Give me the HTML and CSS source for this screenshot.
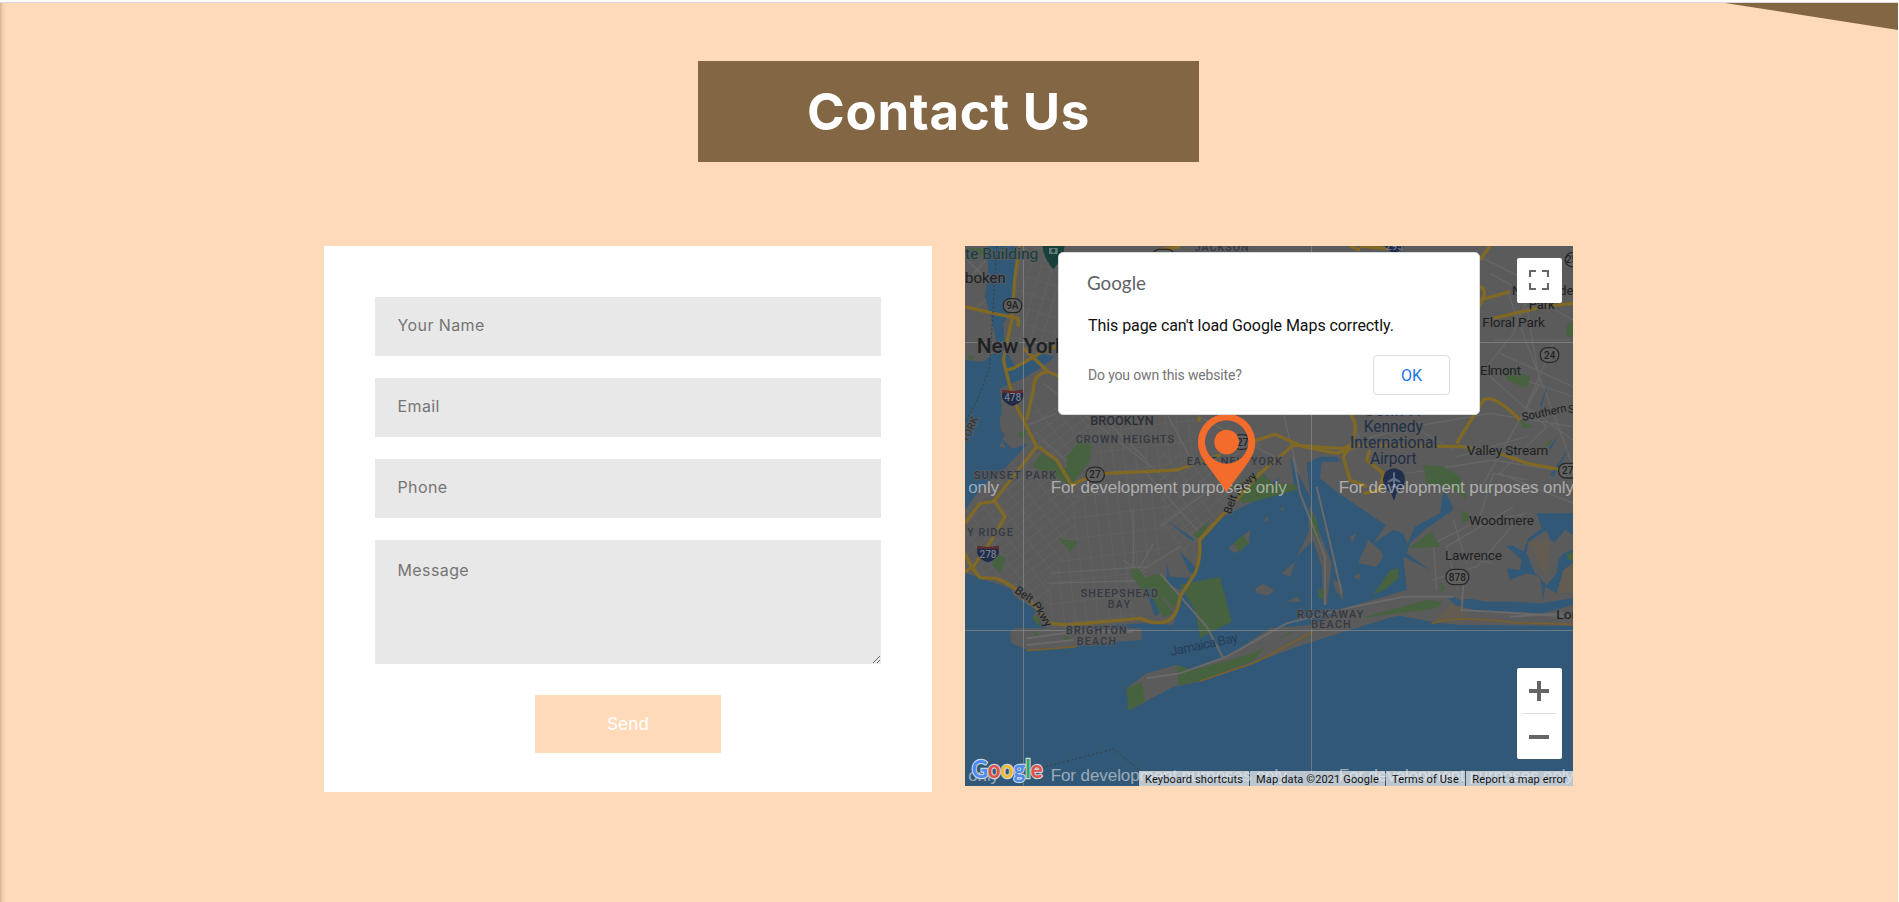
FILE: index.html
```html
<!DOCTYPE html>
<html lang="en">
<head>
<meta charset="utf-8">
<title>Contact Us</title>
<link rel="stylesheet" href="styles.css">
</head>
<body>
<main class="contact">
  <svg class="corner" viewBox="0 0 173 27"><path d="M0 0H173V27Z" fill="#836643"/></svg>
  <h1 class="title">Contact Us</h1>
  <div class="columns">
    <form class="form">
      <input class="field" type="text" placeholder="Your Name">
      <input class="field" type="text" placeholder="Email">
      <input class="field" type="text" placeholder="Phone">
      <textarea class="field message" placeholder="Message"></textarea>
      <button class="send" type="button">Send</button>
    </form>
    <section class="map">
      <svg class="canvas" viewBox="15 18 1824 1620">
        <defs>
          <pattern id="g1" width="44" height="26" patternUnits="userSpaceOnUse" patternTransform="rotate(-38)"><path d="M0 0H44M0 0V26" class="street"/></pattern>
          <pattern id="g2" width="34" height="62" patternUnits="userSpaceOnUse" patternTransform="rotate(-7)"><path d="M0 0H34M0 0V62" class="street"/></pattern>
          <pattern id="g3" width="32" height="46" patternUnits="userSpaceOnUse" patternTransform="rotate(17)"><path d="M0 0H32M0 0V46" class="street"/></pattern>
        </defs>
        <rect x="15" y="18" width="1824" height="1620" fill="#5b5b5b"/>
        <path fill="url(#g3)" d="M170 18H300V320H165Z"/>
        <path fill="url(#g1)" d="M215 500H410L350 840 250 1140 100 1010 20 1000V780L230 620Z"/>
        <path fill="url(#g2)" d="M400 520H700V640L400 780Z"/>
        <path fill="url(#g2)" d="M350 730H620V920L560 1000 530 1150H250Z"/>
        <path fill="url(#g1)" d="M600 640H880L780 820 680 940 600 860Z"/>
        <g class="local">
          <path d="M620 520 700 670 900 600M560 700 720 880M600 860 800 710M700 520 960 660M970 520 1020 720M820 520 900 620M490 960 690 1110M270 1000 560 980M260 1030 600 1020M580 910 530 1000 660 920M520 810 520 980M1170 520 1200 600 1360 560 1590 520 1839 560M1560 50 1720 130 1660 280 1580 380 1839 470M1580 400 1760 560 1620 700 1839 790M1700 200 1740 430 1650 590 1560 750M1780 310 1700 500 1839 600M1340 700 1600 660 1839 700M1590 100 1839 240M1600 300H1830M1620 340 1839 440M1640 150 1780 520 1839 680M1430 1050 1420 910 1540 850 1700 820M1500 1070 1460 920 1660 800M1415 1020 1550 980 1690 820M1480 840 1520 970M1500 950 1600 970M1480 630 1360 560 1290 570M1490 650 1700 590M1560 830 1600 700 1700 720M20 60 120 150M40 210 90 170M20 120 80 60M250 430 600 700M320 430 560 660M190 560 290 520M250 600 360 700"/>
        </g>
        <g fill="#47623f">
          <path d="M120 460 105 500 82 498Z"/><path d="M320 650 370 590 395 610 390 660 340 730 320 690Z"/><path d="M215 680 245 640 340 700 340 745 290 710Z"/><path d="M165 575 200 570 190 600Z"/>
          <path d="M95 975 110 940 138 955 120 1000Z"/><path d="M295 895 355 905 330 935Z"/><path d="M510 990 535 985 640 1120 610 1130 520 1015Z"/><path d="M1630 380 1710 410 1700 445 1640 420Z"/><path d="M1390 675 1450 680 1500 710 1520 780 1470 740 1400 730Z"/><path d="M1820 250H1839V290H1820Z"/><path d="M20 345 45 350 30 362Z"/>
          <path d="M1500 810 1540 830 1510 850ZM1740 820 1770 850 1815 820 1800 850 1760 875ZM1680 540 1720 560 1690 565ZM1750 620 1780 590 1770 615ZM20 25H95L60 45Z"/>
        </g>
        <g fill="#325877">
          <path d="M80 18H178L165 110 160 200 130 250 135 330 170 385 240 340 285 350 240 385 190 415 120 445 125 520 118 555 135 580 118 620 155 628 205 610 130 690 65 740 15 810V360L70 365 115 330 95 240 75 170 85 100Z"/>
          <path d="M15 1000 60 1015 150 1045 165 1070 230 1110 220 1130 260 1165 330 1165 550 1150 640 1155 660 1060 710 990 720 910 790 830 900 775 1005 750 990 650 1050 770 1040 670 1080 650 1130 650 1140 665 1085 665 1080 715 1130 755 1210 810 1278 855 1240 910 1300 870 1330 880 1342 912 1365 860 1440 820 1450 750 1395 680 1470 780 1480 810 1400 865 1350 910 1340 940 1410 990 1330 950 1340 1050 1270 1070 1170 1100 1415 1145 1500 1155 1839 1158V1638H15Z"/>
          <path d="M1450 1070 1500 1070 1580 1085 1660 1085 1740 1090 1839 1075V1095L1750 1120 1510 1110Z"/>
          <path d="M1730 820H1839V885L1815 870 1785 905 1770 900 1760 870 1705 905 1700 940 1725 1000 1760 1035 1790 1000 1795 960 1810 940 1839 930V1060L1790 1060 1755 1040 1750 1080 1740 1010 1700 1000 1650 1020 1640 985 1680 990 1685 960 1640 920 1655 915 1690 935 1705 895 1745 865Z"/>
          <path d="M618 840 700 895 705 905 685 895Z"/><path d="M660 935 705 980 710 1005 690 1000Z"/><path d="M620 970 630 1010 710 1015 660 1050 620 1030Z"/>
          <path d="M590 1040Q630 1040 645 1100L620 1070ZM555 1040 580 1045 610 1110 585 1130ZM910 700 935 730 960 710 930 760ZM120 590 160 630 140 630ZM1765 425 1745 500 1740 495ZM1800 580 1770 630 1765 625ZM1830 620 1780 710 1770 705Z"/>
        </g>
        <g fill="#5b5b5b">
          <path d="M120 530 160 505 200 530 190 570 150 600 122 570Z"/>
          <path d="M150 1180Q155 1160 190 1165H545V1200L470 1205 330 1220 200 1230 155 1210Z"/>
          <path d="M500 1345 560 1300 650 1275 700 1290 800 1250 930 1165 1060 1155 1160 1105 1260 1080 1440 1050 1480 1090 1300 1130 1150 1175 1000 1225 880 1270 720 1325 640 1340 510 1410Z"/>
          <path d="M1415 1150 1470 1090 1540 1110 1740 1120 1839 1115V1150L1680 1150Z"/>
          <path d="M805 925 870 870 868 910 825 940ZM885 1045 910 1032 943 1050 925 1068 890 1060ZM965 1000 1005 965 990 1010ZM1010 950 1035 900 1070 820 1060 900ZM980 1085 1010 1070 1025 1085ZM1195 970 1225 900 1260 930 1270 950 1250 980ZM1170 890 1190 880 1175 910ZM910 840 925 830 922 845ZM960 810 970 800 972 812ZM1120 1020 1145 1030 1150 1080 1125 1050ZM1180 1010 1200 1000 1198 1020ZM1450 1060 1500 1050 1550 1075 1500 1080Z"/>
          <path d="M1050 790 1075 870 1115 970 1100 1095 1090 1090 1085 980 1045 860Z"/>
        </g>
        <path fill="#625d50" d="M1415 1150 1470 1092 1510 1110 1510 1135ZM1705 905 1770 900 1760 1010 1730 960ZM1810 990 1839 970V1060L1790 1060Z"/>
        <g fill="#47623f">
          <path d="M660 1035 780 1010 815 1145 720 1193 705 1110Z"/><path d="M820 910 850 885 865 910 840 935Z"/><path d="M700 885 745 845 740 865 715 895Z"/><path d="M500 1345 545 1325 555 1385 505 1412ZM650 1275 700 1290 880 1240 1000 1170 930 1245 710 1325 655 1335Z"/><path d="M1050 815 1070 840 1085 930 1050 860ZM1345 925 1415 875 1440 920ZM1240 1065 1290 990 1315 985 1315 1015 1280 1045ZM1200 1135 1400 1080 1450 1085 1430 1105Z"/><path d="M550 1015 600 1000 660 1070 640 1105 600 1060 625 1115 600 1120ZM215 1130 245 1130 235 1160ZM900 700 940 730 1010 735V750L900 780 850 790 810 740ZM1440 1030 1455 1040 1445 1060ZM310 1190H325V1200H310ZM220 1175 245 1185 225 1190ZM1820 945 1839 935V960H1825ZM1075 1050 1090 1045V1075H1075Z"/>
        </g>
        <path fill="#5b5b5b" d="M880 1262 930 1205 1060 1155 1060 1180 960 1235Z"/>
        <g class="light"><path d="M200 1195 310 1180 520 1175M200 1215 340 1200M560 1315 660 1300 800 1250 980 1150 1180 1100 1330 1070 1480 1070M1510 1030 1505 1110 1839 1130M1650 1130 1839 1118M600 1000 740 1160 790 1255M1000 650 1020 760 1095 950 1095 1095M1070 740 1120 950 1145 1060"/></g>
        <g class="coast"><path d="M200 1232 350 1220M720 1323 880 1270 1060 1175M1415 1150Q1500 1125 1660 1148L1839 1153"/></g>
        <g class="road"><path d="M178 18 165 110 155 240 130 360 160 480 230 620 100 785 60 790 15 850M15 200 100 220 175 235 175 260M140 390 160 385 240 340 310 310M190 325 265 395 300 410M265 395Q220 400 220 450L200 540M235 620 290 660 335 735 390 710 440 700 650 690 780 645M105 785 135 830 95 900 40 980 15 995M15 940Q30 980 60 1013L110 1015Q180 1040 270 1150L320 1155 540 1135Q650 1180 660 1070L705 1000Q725 950 718 900L810 800 900 700 1000 615 1090 622 1150 625 1170 615 1510 620M860 610 945 583 1030 620 1130 640 1190 620M1170 520Q1210 570 1150 650L1170 720 1220 740M1230 630 1220 660 1270 700 1260 750 1210 760M1490 610 1570 480Q1600 460 1680 540M1510 620 1620 640 1700 670 1839 695M1560 180 1650 155M1550 210Q1590 150 1560 140M1600 235 1750 200 1839 190M1560 60 1590 18M1200 18 1320 30M1170 18 1200 30M720 530 715 545M600 30 660 20"/></g>
        <g class="tiles"><path d="M190.500 18V1638M1054.500 18V1638M15 307.500H1839M15 1171.500H1839"/></g>
        <path d="M220 1590 460 1527 540 1590M110 18 90 370Q60 480 15 545" fill="none" stroke="#363e45" stroke-width="3" stroke-dasharray="6 7"/>
        <g class="shield"><rect x="130" y="176" width="55" height="42" rx="20"/><rect x="378" y="682" width="55" height="44" rx="21"/><rect x="820" y="584" width="50" height="44" rx="20"/><rect x="1741" y="323" width="55" height="44" rx="20"/><rect x="1796" y="670" width="65" height="44" rx="20"/><rect x="1816" y="38" width="55" height="42" rx="20"/><rect x="1458" y="988" width="68" height="46" rx="22"/><rect x="578" y="28" width="65" height="42" rx="20"/></g>
        <g><path d="M128 449Q158 457 189 449L190 470Q184 490 158 498 130 490 126 470Z" fill="#202c4a"/><path d="M128 449Q158 457 189 449V459H128Z" fill="#652b2b"/><path d="M53 917Q84 925 115 917L117 938Q110 958 84 967 56 958 51 938Z" fill="#202c4a"/><path d="M53 917Q84 925 115 917V926H53Z" fill="#652b2b"/><path d="M1272 12H1334Q1328 34 1303 38 1280 34 1272 12Z" fill="#202c4a"/></g>
        <path d="M248 18H313Q315 45 280 88 248 50 248 18Z" fill="#17403d"/><path d="M267 24H293V42H267Z" fill="#667b78"/><circle cx="280" cy="32" r="6" fill="#17403d"/>
        <path d="M1302 685Q1335 690 1335 718 1332 748 1310 758L1302 783 1293 758Q1270 745 1269 718 1272 688 1302 685Z" fill="#202f4d"/><path d="M1299 700Q1302 692 1305 700V713L1321 723V728L1305 723V736L1310 740V744L1302 742 1294 744V740L1299 736V723L1283 728V723L1299 713Z" fill="#63708a"/>
        <g class="label">
          <text class="poi" x="15" y="57" font-size="45" textLength="220" lengthAdjust="spacingAndGlyphs">te Building</text>
          <text x="15" y="129" font-size="43" textLength="122" lengthAdjust="spacingAndGlyphs">boken</text>
          <text class="city" x="50" y="338" font-size="60" textLength="268" lengthAdjust="spacingAndGlyphs">New York</text>
          <text class="borough" x="391" y="555" font-size="36" textLength="190" lengthAdjust="spacingAndGlyphs">BROOKLYN</text>
          <text x="1567" y="260" font-size="41" textLength="188">Floral Park</text>
          <text x="1706" y="206" font-size="39" textLength="78">Park</text><text x="1656" y="164" font-size="40">N</text><text x="1797" y="164" font-size="40">de</text>
          <text x="1560" y="406" font-size="41" textLength="123">Elmont</text>
          <text x="1520" y="645" font-size="41" textLength="245">Valley Stream</text>
          <text x="1527" y="855" font-size="41" textLength="195">Woodmere</text>
          <text x="1455" y="960" font-size="41" textLength="171">Lawrence</text>
          <text x="1789" y="1136" font-size="41">Long</text>
          <text x="1688" y="543" font-size="34" transform="rotate(-12 1688 543)">Southern</text><text x="1824" y="519" font-size="34">St</text>
        </g>
        <g class="label area">
          <text x="704" y="33" textLength="162">JACKSON</text>
          <text x="347" y="608" textLength="295">CROWN HEIGHTS</text><text x="680" y="675" textLength="285">EAST NEW YORK</text><text x="42" y="716" textLength="246">SUNSET PARK</text><text x="22" y="889" textLength="136">Y RIDGE</text>
          <text x="362" y="1071" textLength="232">SHEEPSHEAD</text><text x="443" y="1104" textLength="68">BAY</text><text x="318" y="1183" textLength="182">BRIGHTON</text><text x="350" y="1215" textLength="118">BEACH</text><text x="1012" y="1133" textLength="198">ROCKAWAY</text><text x="1054" y="1165" textLength="118">BEACH</text>
          <text x="22" y="610" transform="rotate(-66 22 610)">YORK</text>
        </g>
        <g class="label airport"><text x="1300" y="528" text-anchor="middle" textLength="165">John F.</text><text x="1300" y="575" text-anchor="middle" textLength="178">Kennedy</text><text x="1301" y="623" text-anchor="middle" textLength="262">International</text><text x="1300" y="671" text-anchor="middle" textLength="140">Airport</text></g>
        <g class="bay"><text x="634" y="1248" textLength="206" transform="rotate(-12 634 1248)">Jamaica Bay</text></g>
        <g class="roadname"><text x="812" y="824" transform="rotate(-70 812 824)">Belt</text><text x="836" y="768" transform="rotate(-46 836 768)">Pkwy</text><text x="162" y="1056" transform="rotate(35 162 1056)">Belt</text><text x="216" y="1094" transform="rotate(59 216 1094)">Pkwy</text></g>
        <g class="route"><text x="157" y="208">9A</text><text x="405" y="715">27</text><text x="848" y="618">27</text><text x="1769" y="356">24</text><text x="1823" y="703">27</text><text x="1834" y="70">25</text><text x="1492" y="1022">878</text></g>
        <g class="route inter"><text x="158" y="483">478</text><text x="84" y="954">278</text><text x="1303" y="30">295</text></g>
        <g class="mark"><text x="25" y="758" textLength="92">only</text><text x="272" y="758" textLength="708">For development purposes only</text><text x="1136" y="758" textLength="706">For development purposes only</text><text x="25" y="1622" textLength="92">only</text><text x="272" y="1622" textLength="708">For development purposes only</text><text x="1136" y="1622" textLength="706">For development purposes only</text></g>
        <path fill="#f46c2b" fill-rule="evenodd" d="M800 522C752 522 714 560 714 608 714 638 732 663 746 682 768 711 786 737 800 756 814 735 838 705 854 682 870 659 886 637 886 608 886 560 848 522 800 522ZM800 541A65 65 0 0 1 800 671 65 65 0 0 1 800 541Z"/><circle cx="800" cy="606" r="37" fill="#f46c2b"/>
        <text class="brand" x="35" y="1615" textLength="213" lengthAdjust="spacingAndGlyphs"><tspan fill="#4d8bf0">G</tspan><tspan fill="#e45045">o</tspan><tspan fill="#f2bb23">o</tspan><tspan fill="#4d8bf0">g</tspan><tspan fill="#3ba45b">l</tspan><tspan fill="#e45045">e</tspan></text>
      </svg>
      <div class="dialog">
        <svg class="wordmark" viewBox="0 0 62 26"><text x="0" y="15" textLength="59" lengthAdjust="spacingAndGlyphs">Google</text></svg>
        <p class="error">This page can't load Google Maps correctly.</p>
        <div class="dialog-row"><span class="owner">Do you own this website?</span><button class="ok" type="button">OK</button></div>
      </div>
      <button class="full" type="button" aria-label="Fullscreen"><svg width="20" height="20" viewBox="0 0 20 20"><path d="M1 7V1H7M13 1H19V7M19 13V19H13M7 19H1V13" fill="none" stroke="#666" stroke-width="2.200"/></svg></button>
      <div class="zoom"><svg width="20" height="20"><path d="M0 10H20M10 0V20" stroke="#666" stroke-width="4"/></svg><i class="rule"></i><svg width="20" height="20"><path d="M0 10H20" stroke="#666" stroke-width="4"/></svg></div>
      <footer class="credits"><span class="credit c1">Keyboard shortcuts</span><span class="credit c2">Map data ©2021 Google</span><span class="credit c3">Terms of Use</span><span class="credit c4">Report a map error</span></footer>
    </section>
  </div>
</main>
</body>
</html>
```
FILE: styles.css
```css
* { box-sizing: border-box; }
body { margin: 0; background: #fff; overflow: hidden; }
.contact { position: relative; width: 1898px; height: 900px; margin-top: 2px; padding-top: 58px; border-top: 1px solid #d9d8e1; background: linear-gradient(90deg, #d5b496 0, #f4d0b0 3px, transparent 6px) #ffdab9; font-family: Inter, sans-serif; }
.corner { position: absolute; right: 0; top: 0; width: 173px; height: 27px; }
.title { width: 501px; height: 101px; margin: 0 0 0 698px; background: #836643; color: #fff; font-size: 51px; font-weight: 650; line-height: 101px; letter-spacing: 0.7px; text-align: center; }
.columns { display: flex; gap: 33px; align-items: flex-start; margin: 84px 0 0 324px; }
.form { display: flex; flex-direction: column; width: 608px; height: 546px; padding: 51px; background: #fff; }
.field { display: block; flex: none; width: 100%; height: 59px; margin: 0 0 22px; padding: 0 22.500px 3px; border: 0; border-radius: 0; outline: 0; background: #e8e8e8; font: 16px Inter, sans-serif; letter-spacing: 0.4px; }
.field::placeholder { color: #757575; opacity: 1; }
.message { height: 124px; margin-bottom: 31px; padding-top: 20px; resize: vertical; }
.send { flex: none; align-self: center; width: 186px; height: 58px; padding: 0; border: 0; background: #ffdab9; color: #fff; font: 17px Inter, sans-serif; letter-spacing: 0.2px; }
.map { position: relative; width: 608px; height: 540px; overflow: hidden; font-family: Roboto, sans-serif; }
.canvas { display: block; width: 608px; height: 540px; font-family: Roboto, sans-serif; }
.street { fill: none; stroke: #646566; stroke-width: 3; }
.local { fill: none; stroke: #656667; stroke-width: 4; }
.light { fill: none; stroke: #69696a; stroke-width: 6; }
.coast { fill: none; stroke: #785f2d; stroke-width: 5; }
.road { fill: none; stroke: #806925; stroke-width: 10; stroke-linejoin: round; }
.tiles { fill: none; stroke: #8b8e8f; stroke-opacity: .65; stroke-width: 3; }
.shield rect { fill: #606060; stroke: #292929; stroke-width: 4; }
.label text, .roadname text { fill: #202124; stroke: #5b5b5b; stroke-width: 5; paint-order: stroke; }
.label .city { font-weight: 500; }
.label .borough { fill: #2c3036; font-weight: 500; }
.label .poi { fill: #173e40; }
.label.area text { fill: #343943; font-size: 32px; font-weight: 500; }
.label.airport text { fill: #222f48; font-size: 47px; }
.bay { fill: #263d57; font-size: 39px; }
.roadname { font-size: 34px; }
.route { fill: #222; font-size: 30px; font-weight: 500; text-anchor: middle; }
.inter { fill: #777d8a; }
.mark { fill: #fff; fill-opacity: .5; font-family: "Liberation Sans", sans-serif; font-size: 51px; }
.brand { font-family: Lato, sans-serif; font-size: 74px; font-weight: 700; stroke: #c9d4df; stroke-width: 7; paint-order: stroke; }
.dialog { position: absolute; left: 93px; top: 6px; width: 422px; height: 163px; padding: 22px 29px 0; border: 1px solid #d5dadc; border-radius: 5px; background: #fff; }
.wordmark { display: block; width: 62px; height: 26px; margin-left: -1px; overflow: visible; fill: #5f6368; font-family: Lato, sans-serif; font-size: 20px; }
.error { margin: 14px 0 0; color: #111; font-size: 16px; line-height: 22px; letter-spacing: -0.07px; white-space: nowrap; }
.dialog-row { display: flex; justify-content: space-between; align-items: center; margin-top: 18px; }
.owner { color: #757575; font-size: 14px; letter-spacing: -0.16px; }
.ok { width: 77px; height: 40px; border: 1px solid #dadce0; border-radius: 4px; background: #fff; color: #1a73e8; font: 16px Roboto, sans-serif; }
.full { position: absolute; left: 552px; top: 12px; display: grid; place-items: center; width: 45px; height: 45px; padding: 0 1px 1px 0; border: 0; border-radius: 2px; background: #fff; }
.zoom { position: absolute; left: 552px; top: 422px; display: flex; flex-direction: column; align-items: center; width: 45px; height: 91px; padding: 13px 1px 0 0; border-radius: 2px; background: #fff; }
.rule { width: 34px; height: 1px; margin: 12px 0 13px; background: #e0e0e0; }
.credits { position: absolute; right: 0; bottom: 0; display: flex; gap: 1px; height: 15px; color: #111; font-size: 11px; line-height: 17px; letter-spacing: 0.14px; }
.credit { overflow: hidden; background: rgba(245, 245, 245, .7); text-align: center; white-space: nowrap; }
.c1 { width: 110px; }
.c2 { width: 135px; }
.c3 { width: 79px; }
.c4 { width: 107px; }
```
